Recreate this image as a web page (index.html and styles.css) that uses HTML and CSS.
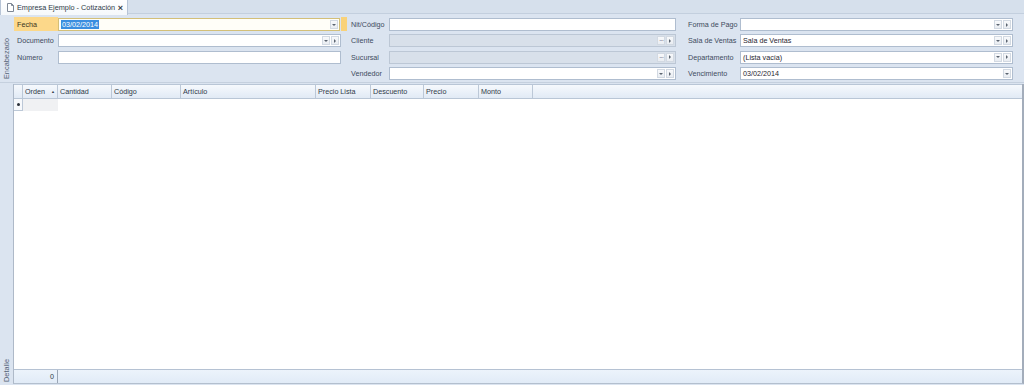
FILE: index.html
```html
<!DOCTYPE html>
<html lang="es">
<head>
<meta charset="utf-8">
<title>Cotización</title>
<link rel="stylesheet" href="styles.css">
</head>
<body>
<div class="app">
  <div class="tabstrip">
    <div class="tab">
      <svg class="doc-icon" width="7" height="9" viewBox="0 0 7 9"><path d="M0.5 0.5 H4.5 L6.5 2.5 V8.5 H0.5 Z M4.5 0.5 V2.5 H6.5" fill="#fff" stroke="#7d8795" stroke-width="1"/></svg>
      <span class="tab-title">Empresa Ejemplo - Cotización</span>
      <span class="tab-close">×</span>
    </div>
  </div>
  <div class="page">
    <div class="group header-group">
      <div class="vcap"><span>Encabezado</span></div>
      <div class="header-body">
        <div class="col col-left">
          <div class="row">
            <div class="lbl lbl-focus">Fecha</div>
            <div class="edit edit-focus"><span class="val"><span class="sel">03/02/2014</span></span><span class="btn"><svg width="4" height="2" viewBox="0 0 4 2"><path d="M0 0H4L2 2Z" fill="#5b6470"/></svg></span></div>
            <div class="focus-strip"></div>
          </div>
          <div class="row">
            <div class="lbl">Documento</div>
            <div class="edit"><span class="val"></span><span class="btn"><svg width="4" height="2" viewBox="0 0 4 2"><path d="M0 0H4L2 2Z" fill="#5b6470"/></svg></span><span class="btn"><svg width="2" height="4" viewBox="0 0 2 4"><path d="M0 0V4L2 2Z" fill="#5b6470"/></svg></span></div>
          </div>
          <div class="row">
            <div class="lbl">Número</div>
            <div class="edit"><span class="val"></span></div>
          </div>
        </div>
        <div class="col col-mid">
          <div class="row">
            <div class="lbl">Nit/Código</div>
            <div class="edit"><span class="val"></span></div>
          </div>
          <div class="row">
            <div class="lbl">Cliente</div>
            <div class="edit edit-disabled"><span class="val"></span><span class="btn btn-dots">···</span><span class="btn"><svg width="2" height="4" viewBox="0 0 2 4"><path d="M0 0V4L2 2Z" fill="#5b6470"/></svg></span></div>
          </div>
          <div class="row">
            <div class="lbl">Sucursal</div>
            <div class="edit edit-disabled"><span class="val"></span><span class="btn btn-dots">···</span><span class="btn"><svg width="2" height="4" viewBox="0 0 2 4"><path d="M0 0V4L2 2Z" fill="#5b6470"/></svg></span></div>
          </div>
          <div class="row">
            <div class="lbl">Vendedor</div>
            <div class="edit"><span class="val"></span><span class="btn"><svg width="4" height="2" viewBox="0 0 4 2"><path d="M0 0H4L2 2Z" fill="#5b6470"/></svg></span><span class="btn"><svg width="2" height="4" viewBox="0 0 2 4"><path d="M0 0V4L2 2Z" fill="#5b6470"/></svg></span></div>
          </div>
        </div>
        <div class="col col-right">
          <div class="row">
            <div class="lbl">Forma de Pago</div>
            <div class="edit"><span class="val"></span><span class="btn"><svg width="4" height="2" viewBox="0 0 4 2"><path d="M0 0H4L2 2Z" fill="#5b6470"/></svg></span><span class="btn"><svg width="2" height="4" viewBox="0 0 2 4"><path d="M0 0V4L2 2Z" fill="#5b6470"/></svg></span></div>
          </div>
          <div class="row">
            <div class="lbl">Sala de Ventas</div>
            <div class="edit"><span class="val">Sala de Ventas</span><span class="btn"><svg width="4" height="2" viewBox="0 0 4 2"><path d="M0 0H4L2 2Z" fill="#5b6470"/></svg></span><span class="btn"><svg width="2" height="4" viewBox="0 0 2 4"><path d="M0 0V4L2 2Z" fill="#5b6470"/></svg></span></div>
          </div>
          <div class="row">
            <div class="lbl">Departamento</div>
            <div class="edit"><span class="val">(Lista vacía)</span><span class="btn"><svg width="4" height="2" viewBox="0 0 4 2"><path d="M0 0H4L2 2Z" fill="#5b6470"/></svg></span><span class="btn"><svg width="2" height="4" viewBox="0 0 2 4"><path d="M0 0V4L2 2Z" fill="#5b6470"/></svg></span></div>
          </div>
          <div class="row">
            <div class="lbl">Vencimiento</div>
            <div class="edit"><span class="val">03/02/2014</span><span class="btn"><svg width="4" height="2" viewBox="0 0 4 2"><path d="M0 0H4L2 2Z" fill="#5b6470"/></svg></span></div>
          </div>
        </div>
      </div>
    </div>
    <div class="group detail-group">
      <div class="vcap"><span>Detalle</span></div>
      <div class="grid">
        <div class="grid-head">
          <div class="hc c-ind"></div>
          <div class="hc c-orden">Orden<span class="sort">▲</span></div>
          <div class="hc c-cant">Cantidad</div>
          <div class="hc c-cod">Código</div>
          <div class="hc c-art">Artículo</div>
          <div class="hc c-pl">Precio Lista</div>
          <div class="hc c-desc">Descuento</div>
          <div class="hc c-pre">Precio</div>
          <div class="hc c-mon">Monto</div>
          <div class="hc c-fill"></div>
        </div>
        <div class="grid-body">
          <div class="grow">
            <div class="rc c-ind ind-cell"><span class="dot"></span></div>
            <div class="rc c-orden cur-cell"></div>
          </div>
        </div>
        <div class="grid-foot">
          <div class="fc c-sum">0</div>
        </div>
      </div>
    </div>
  </div>
</div>
</body>
</html>
```

FILE: styles.css
```css
html, body {
  margin: 0;
  padding: 0;
}
body {
  width: 1024px;
  height: 385px;
  overflow: hidden;
  background: #dbe4f0;
  font-family: "Liberation Sans", Arial, sans-serif;
  font-size: 7.2px;
  color: #3e4b5d;
}
.app {
  display: flex;
  flex-direction: column;
  height: 385px;
}
.tabstrip {
  height: 14px;
  display: flex;
  background: #d6e0ec;
  border-bottom: 1px solid #c3cfde;
  box-sizing: border-box;
}
.tab {
  width: 128px;
  height: 15px;
  box-sizing: border-box;
  display: flex;
  align-items: center;
  padding-left: 6px;
  background: linear-gradient(#ffffff, #f5f8fb);
  border: 1px solid #b7c4d6;
  border-top: none;
  border-bottom: none;
  color: #2f3a48;
  font-size: 7.3px;
}
.doc-icon {
  margin-right: 3px;
  flex: none;
}
.tab-title {
  flex: 1;
}
.tab-close {
  font-weight: bold;
  font-size: 9px;
  margin-right: 4px;
  color: #3a3f47;
}
.page {
  flex: 1;
  display: flex;
  flex-direction: column;
}
.group {
  display: flex;
}
.header-group {
  height: 69px;
  border-bottom: 1px solid #c5d0de;
  box-sizing: border-box;
}
.vcap {
  width: 13px;
  flex: none;
  display: flex;
  flex-direction: column;
  justify-content: flex-end;
  align-items: center;
  padding-bottom: 3px;
  box-sizing: border-box;
  color: #556377;
  font-size: 7.4px;
}
.vcap span {
  writing-mode: vertical-rl;
  transform: rotate(180deg);
}
.header-body {
  display: flex;
  padding-top: 4px;
  padding-left: 1px;
}
.col {
  display: flex;
  flex-direction: column;
  gap: 3.4px;
}
.col-left { width: 333px; }
.col-mid { width: 328px; margin-left: 1px; }
.col-right { width: 328px; margin-left: 9px; }
.row {
  display: flex;
  height: 13px;
  align-items: stretch;
}
.lbl {
  padding-left: 3px;
  display: flex;
  align-items: center;
  box-sizing: border-box;
  flex: none;
}
.col-left .lbl { width: 44px; }
.col-mid .lbl { width: 41px; }
.col-right .lbl { width: 55px; }
.lbl-focus {
  background: #fcd88a;
  margin-top: -1px;
  height: 14px;
  color: #3b3420;
}
.edit {
  display: flex;
  align-items: stretch;
  background: #ffffff;
  border: 1px solid #afbdcf;
  box-sizing: border-box;
  padding: 1px;
}
.col-left .edit { width: 283px; }
.col-mid .edit { width: 287px; }
.col-right .edit { width: 273px; }
.edit-focus {
  border-color: #d3bf78;
  background: #fffef8;
}
.edit-disabled {
  background: #d8e0ea;
  border-color: #bcc7d5;
}
.val {
  flex: 1;
  display: flex;
  align-items: center;
  padding-left: 1px;
  color: #1f2630;
  white-space: nowrap;
}
.sel {
  background: #3b8ee0;
  color: #ffffff;
  padding: 0 1px;
  line-height: 9px;
}
.btn {
  width: 8px;
  flex: none;
  display: flex;
  align-items: center;
  justify-content: center;
  background: linear-gradient(#f8f9fb, #e9edf2);
  border: 1px solid #d2d9e2;
  box-sizing: border-box;
  margin-left: 1px;
}
.btn-dots {
  font-size: 7px;
  color: #5b6470;
  letter-spacing: -1px;
  line-height: 1;
}
.focus-strip {
  width: 6px;
  margin-left: 1px;
  margin-top: -1px;
  height: 14px;
  background: #f9d27a;
}
.detail-group {
  flex: 1;
  margin-top: 1px;
}
.grid {
  width: 1008px;
  display: flex;
  flex-direction: column;
  background: #ffffff;
  border-left: 1px solid #aeb9c8;
  border-right: 2px solid #a3adbb;
  border-bottom: 1px solid #b3bfce;
  margin-bottom: 1px;
}
.grid-head {
  display: flex;
  height: 13px;
  background: linear-gradient(#f6f9fd, #e1eaf5);
  border-top: 1px solid #b9c6d6;
  border-bottom: 1px solid #b9c6d6;
  box-sizing: content-box;
}
.hc {
  box-sizing: border-box;
  border-right: 1px solid #bcc8d7;
  padding-left: 2px;
  display: flex;
  align-items: center;
  color: #2f3a48;
  flex: none;
  white-space: nowrap;
}
.c-ind { width: 9px; padding: 0; }
.c-orden { width: 35px; }
.c-cant { width: 54px; }
.c-cod { width: 69px; }
.c-art { width: 135px; }
.c-pl { width: 55px; }
.c-desc { width: 53px; }
.c-pre { width: 55px; }
.c-mon { width: 54px; }
.c-fill { flex: 1; border-right: none; }
.sort {
  font-size: 4px;
  margin-left: 6px;
  color: #3a4350;
}
.grid-body {
  flex: 1;
}
.grow {
  display: flex;
  height: 12px;
}
.rc {
  box-sizing: border-box;
  flex: none;
}
.ind-cell {
  border-right: 1px solid #bcc8d7;
  border-bottom: 1px solid #bcc8d7;
  display: flex;
  align-items: center;
  justify-content: center;
  background: #f7f9fc;
}
.dot {
  width: 3px;
  height: 3px;
  border-radius: 50%;
  background: #2a2f38;
}
.cur-cell {
  background: #f0f1f3;
}
.grid-foot {
  display: flex;
  height: 13px;
  background: linear-gradient(#ecf3fb, #e1ebf7);
  border-top: 1px solid #b5c2d3;
}
.fc {
  box-sizing: border-box;
  display: flex;
  align-items: center;
  justify-content: flex-end;
  color: #2f3a48;
}
.c-sum {
  width: 44px;
  padding-right: 3px;
  border-right: 1px solid #9aa6b6;
}
```
